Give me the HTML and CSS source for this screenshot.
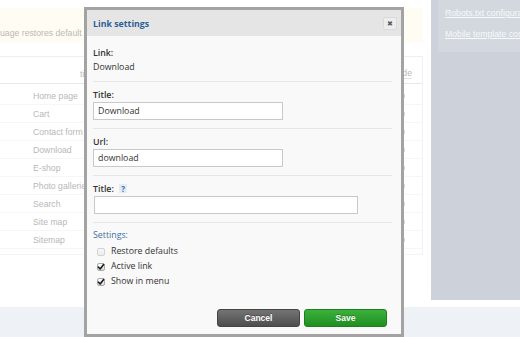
FILE: index.html
```html
<!DOCTYPE html>
<html>
<head>
<meta charset="utf-8">
<link rel="stylesheet" href="styles.css">
</head>
<body>
<div class="page">
  <div class="main">
    <div class="content">
      <div class="notice">uage restores default links.</div>
      <div class="table">
        <div class="thead">
          <span class="th-title">title</span>
          <span class="th-hide">Hide</span>
        </div>
        <div class="row"><span class="name">Home page</span><span class="mark"></span></div>
        <div class="row"><span class="name">Cart</span><span class="mark"></span></div>
        <div class="row"><span class="name">Contact form</span><span class="mark"></span></div>
        <div class="row"><span class="name">Download</span><span class="mark"></span></div>
        <div class="row"><span class="name">E-shop</span><span class="mark"></span></div>
        <div class="row"><span class="name">Photo galleries</span><span class="mark"></span></div>
        <div class="row"><span class="name">Search</span><span class="mark"></span></div>
        <div class="row"><span class="name">Site map</span><span class="mark"></span></div>
        <div class="row"><span class="name">Sitemap</span><span class="mark"></span></div>
      </div>
    </div>
    <aside class="sidebar">
      <div class="side-links">
        <a href="#">Robots.txt configuration</a>
        <a href="#">Mobile template configuration</a>
      </div>
    </aside>
  </div>
  <div class="footer"></div>
</div>

<div class="modal">
  <div class="modal-head">
    <span class="modal-title">Link settings</span>
    <span class="close">&#x2716;</span>
  </div>
  <div class="modal-body">
    <div class="field first">
      <div class="label">Link:</div>
      <div class="value">Download</div>
    </div>
    <div class="field">
      <div class="label">Title:</div>
      <input class="text short" type="text" value="Download">
    </div>
    <div class="field">
      <div class="label">Url:</div>
      <input class="text short" type="text" value="download">
    </div>
    <div class="field">
      <div class="label">Title: <span class="help">?</span></div>
      <input class="text long" type="text" value="">
    </div>
    <div class="settings">
      <div class="settings-title">Settings:</div>
      <div class="check disabled"><span class="box"></span>Restore defaults</div>
      <div class="check"><span class="box"><svg viewBox="0 0 8 8" width="8" height="8"><path d="M1.5 4.2 L3.2 6 L6.6 1.6" fill="none" stroke="#1c1c1c" stroke-width="1.6" stroke-linecap="round" stroke-linejoin="round"/></svg></span>Active link</div>
      <div class="check"><span class="box"><svg viewBox="0 0 8 8" width="8" height="8"><path d="M1.5 4.2 L3.2 6 L6.6 1.6" fill="none" stroke="#1c1c1c" stroke-width="1.6" stroke-linecap="round" stroke-linejoin="round"/></svg></span>Show in menu</div>
    </div>
    <div class="actions">
      <button class="btn cancel">Cancel</button>
      <button class="btn save">Save</button>
    </div>
  </div>
</div>
</body>
</html>
```

FILE: styles.css
```css
* { box-sizing: border-box; }
html, body { margin: 0; padding: 0; }
body {
  width: 520px;
  height: 337px;
  overflow: hidden;
  background: #ffffff;
  font-family: "Liberation Sans", Arial, sans-serif;
  position: relative;
}
.page { display: flex; flex-direction: column; height: 337px; }
.main { display: flex; height: 300px; gap: 8px; }
.content { width: 423px; padding-top: 8px; }
.notice {
  height: 35px;
  background: #fffdf3;
  color: #b9b9b3;
  font-size: 8.7px;
  line-height: 12px;
  padding-top: 19px;
  white-space: nowrap;
  overflow: hidden;
}
.table {
  margin-top: 13px;
  border-top: 1px solid #eeeeee;
  border-right: 1px solid #f1f1f1;
  border-bottom: 1px solid #f3f3f3;
  padding-bottom: 5px;
  font-size: 8.7px;
  color: #b8b8b8;
}
.thead {
  height: 27px;
  border-bottom: 1px solid #e8e8e8;
  display: flex;
  align-items: flex-end;
  padding-bottom: 4px;
}
.th-title { margin-left: 80px; }
.th-hide { margin-left: auto; margin-right: 10px; border-bottom: 1px solid #e0e0e0; }
.row {
  height: 18px;
  display: flex;
  align-items: center;
  border-bottom: 1px solid #f6f6f6;
}
.thead + .row { margin-top: 3px; }
.name { margin-left: 33px; }
.mark {
  margin-left: auto;
  margin-right: 17px;
  width: 2px;
  height: 4px;
  background: #f3d6b8;
}
.sidebar {
  width: 89px;
  height: 300px;
  background: #cdd2da;
  overflow: hidden;
}
.side-links {
  margin-left: 7px;
  height: 52px;
  background: #d3d8df;
  padding: 3px 0 7px 7px;
  display: flex;
  flex-direction: column;
}
.side-links a {
  color: #f7f8fa;
  font-size: 8.7px;
  line-height: 21px;
  white-space: nowrap;
  text-decoration: underline;
}
.footer {
  margin-top: 7px;
  height: 30px;
  background: #eef1f5;
}

/* modal */
.modal {
  position: absolute;
  left: 84px;
  top: 7px;
  width: 320px;
  height: 330px;
  border: 3px solid #a3a3a3;
  background: #f9f9f9;
  font-family: "Open Sans", "DejaVu Sans", sans-serif;
  font-size: 8.8px;
  color: #333333;
  overflow: hidden;
}
.modal-head {
  height: 26px;
  background: #e5e5e5;
  display: flex;
  align-items: center;
  padding-left: 6px;
  padding-right: 4px;
}
.modal-title {
  color: #2c5f94;
  font-weight: 700;
  padding-top: 1px;
}
.close {
  margin-left: auto;
  width: 14px;
  height: 13px;
  background: #ededed;
  border: 1px solid #dadada;
  border-radius: 2px;
  color: #5a5a5a;
  font-size: 7px;
  line-height: 11px;
  text-align: center;
}
.modal-body { padding: 10px 9px 0 6px; }
.field {
  padding: 6px 0 8px;
  border-bottom: 1px solid #e6e6e6;
}
.field.first { padding: 0 0 7px; }
.label {
  font-weight: 600;
  line-height: 14px;
  color: #333;
}
.value { line-height: 14px; }
.help {
  display: inline-block;
  width: 8px;
  height: 9px;
  line-height: 9px;
  margin-left: 3px;
  text-align: center;
  font-weight: 700;
  color: #3b6fa6;
  background: #e4ecf5;
  font-size: 8px;
}
.text {
  display: block;
  height: 18px;
  border: 1px solid #c9c9c9;
  background: #ffffff;
  font-family: "Open Sans", "DejaVu Sans", sans-serif;
  font-size: 8.8px;
  color: #333;
  padding: 0 4px;
  margin: 0;
  outline: none;
}
.text.short { width: 190px; }
.text.long { width: 264px; margin-left: 1px; }
.settings { padding-top: 5px; }
.settings-title {
  color: #3d6fa6;
  line-height: 14px;
  margin-bottom: 2px;
}
.check {
  display: flex;
  align-items: center;
  line-height: 15px;
  height: 15px;
  padding-left: 4px;
  color: #333;
}
.check .box {
  width: 8px;
  height: 8px;
  border: 1px solid #aaaaaa;
  border-radius: 2px;
  background: linear-gradient(#ffffff, #dcdcdc);
  margin-right: 6px;
  display: flex;
  align-items: center;
  justify-content: center;
}
.check .box svg { flex: none; }
.check.disabled .box {
  border-color: #d2d2d2;
  background: linear-gradient(#f7f7f7, #ececec);
}
.actions {
  margin-top: 20px;
  display: flex;
  justify-content: flex-end;
  gap: 4px;
  padding-right: 5px;
}
.btn {
  width: 83px;
  height: 18px;
  border-radius: 3px;
  font-family: "Liberation Sans", Arial, sans-serif;
  font-weight: 700;
  font-size: 8.5px;
  color: #ffffff;
  padding: 0;
  text-shadow: 0 -1px 0 rgba(0,0,0,0.25);
}
.cancel {
  border: 1px solid #444444;
  background: linear-gradient(#747474, #4e4e4e);
}
.save {
  border: 1px solid #1d801d;
  background: linear-gradient(#3cb03c, #1f901f);
}
```
